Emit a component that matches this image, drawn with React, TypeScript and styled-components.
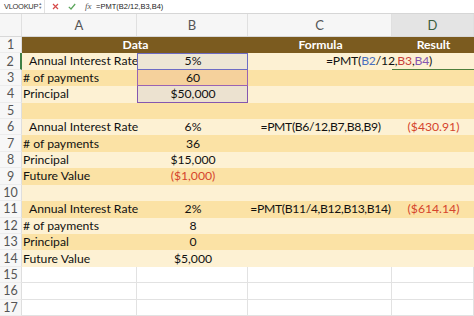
import React from "react";
import styled, { createGlobalStyle } from "styled-components";

const Global = createGlobalStyle`
  html, body { margin: 0; padding: 0; background: #ffffff; }
  body { width: 474px; height: 316px; overflow: hidden; font-family: Lato, "Open Sans", sans-serif; }
`;

const COLS = "22px 115px 111px 144px 82px";
const ROW_H = 16.45;
const FS = "12.2px";

const Page = styled.div`
  width: 474px;
  height: 316px;
  display: flex;
  flex-direction: column;
  overflow: hidden;
`;

const FormulaBar = styled.div`
  height: 13px;
  border-bottom: 1px solid #d6d6d6;
  display: flex;
  align-items: center;
  font-family: "Liberation Sans", Arial, sans-serif;
  font-size: 7.5px;
  color: #333;
  background: #fff;
`;

const NameBox = styled.div`
  width: 44px;
  display: flex;
  align-items: center;
  justify-content: space-between;
  padding: 0 4px 0 4px;
  box-sizing: border-box;
  letter-spacing: -0.3px;
`;

const Spinner = styled.span`
  display: flex;
  flex-direction: column;
  font-size: 4px;
  line-height: 4px;
  color: #777;
`;

const BarIcons = styled.div`
  display: flex;
  align-items: center;
  gap: 9px;
  padding-left: 7px;
  border-left: 1px solid #e2e2e2;
  height: 100%;
  width: 50px;
  box-sizing: border-box;
`;

const FxLabel = styled.span`
  font-family: "Liberation Serif", serif;
  font-style: italic;
  font-size: 9px;
  color: #555;
`;

const FormulaText = styled.span`
  padding-left: 2px;
  font-size: 7.5px;
  color: #222;
`;

const HeaderRow = styled.div`
  height: 23px;
  display: grid;
  grid-template-columns: ${COLS};
  background: #f6f6f6;
  border-bottom: 1px solid #d8d8d8;
  box-sizing: border-box;
`;

const ColHead = styled.div<{ $active?: boolean }>`
  display: flex;
  align-items: center;
  justify-content: center;
  font-size: 13px;
  color: ${(p) => (p.$active ? "#3b5f3e" : "#555")};
  background: ${(p) => (p.$active ? "#e4e4e4" : "transparent")};
  border-right: 1px solid #e0e0e0;
  padding-top: 1px;
  box-sizing: border-box;
`;

const Row = styled.div<{ $bg: string }>`
  height: ${ROW_H}px;
  display: grid;
  grid-template-columns: ${COLS};
  background: ${(p) => p.$bg};
  position: relative;
`;

const RowNum = styled.div<{ $active?: boolean }>`
  background: #f7f7f7;
  color: #555;
  font-size: 12.5px;
  display: flex;
  align-items: center;
  justify-content: center;
  border-right: ${(p) => (p.$active ? "2px solid #3f7f45" : "1px solid #dedede")};
  border-bottom: 1px solid #ececec;
  box-sizing: border-box;
`;

const Cell = styled.div<{
  $align?: "left" | "center" | "right";
  $color?: string;
  $bold?: boolean;
  $span?: number;
  $fill?: string;
  $grid?: boolean;
  $indent?: number;
  $tight?: boolean;
}>`
  grid-column: span ${(p) => p.$span || 1};
  display: flex;
  align-items: center;
  justify-content: ${(p) =>
    p.$align === "center" ? "center" : p.$align === "right" ? "flex-end" : "flex-start"};
  padding-left: ${(p) => (p.$indent != null ? p.$indent : 1)}px;
  font-size: ${FS};
  letter-spacing: ${(p) => (p.$tight ? "-0.35px" : "0")};
  font-weight: ${(p) => (p.$bold ? 700 : 400)};
  color: ${(p) => p.$color || "#111"};
  background: ${(p) => p.$fill || "transparent"};
  white-space: nowrap;
  overflow: visible;
  box-sizing: border-box;
  border-right: ${(p) => (p.$grid ? "1px solid #e2e2e2" : "none")};
  border-bottom: ${(p) => (p.$grid ? "1px solid #e2e2e2" : "none")};
  line-height: 1;
`;

const RefBox = styled.div<{ $color: string; $top?: boolean }>`
  position: absolute;
  inset: 0;
  border-left: 1px solid ${(p) => p.$color};
  border-right: 1px solid ${(p) => p.$color};
  border-bottom: 1px solid ${(p) => p.$color};
  border-top: ${(p) => (p.$top ? `1px solid ${p.$color}` : "none")};
  pointer-events: none;
`;

const RefCell = styled(Cell)`
  position: relative;
`;

const ActiveLine = styled.div`
  position: absolute;
  left: 0;
  right: 0;
  bottom: 0;
  height: 1px;
  background: #4f7f3c;
`;

const Ref = styled.span<{ $c: string }>`
  color: ${(p) => p.$c};
`;

const EditText = styled.span`
  position: absolute;
  left: 78px;
  top: 0;
  bottom: 0;
  display: flex;
  align-items: center;
  font-size: ${FS};
  letter-spacing: -0.2px;
  z-index: 2;
`;

const LIGHT = "#fdf1d3";
const DARK = "#fbe2a5";
const BROWN = "#7b5b1f";
const RED = "#d5452d";

type R = {
  n: number;
  a?: string;
  b?: string;
  bRed?: boolean;
  c?: string;
  d?: string;
  aIndent?: number;
};

const rows: R[] = [
  { n: 3, a: "# of payments", b: "60" },
  { n: 4, a: "Principal", b: "$50,000" },
  { n: 5 },
  { n: 6, a: "Annual Interest Rate", aIndent: 7, b: "6%", c: "=PMT(B6/12,B7,B8,B9)", d: "($430.91)" },
  { n: 7, a: "# of payments", b: "36" },
  { n: 8, a: "Principal", b: "$15,000" },
  { n: 9, a: "Future Value", b: "($1,000)", bRed: true },
  { n: 10 },
  { n: 11, a: "Annual Interest Rate", aIndent: 7, b: "2%", c: "=PMT(B11/4,B12,B13,B14)", d: "($614.14)" },
  { n: 12, a: "# of payments", b: "8" },
  { n: 13, a: "Principal", b: "0" },
  { n: 14, a: "Future Value", b: "$5,000" },
];

export default function App() {
  return (
    <Page>
      <Global />
      <FormulaBar>
        <NameBox>
          <span>VLOOKUP</span>
          <Spinner>
            <span>▲</span>
            <span>▼</span>
          </Spinner>
        </NameBox>
        <BarIcons>
          <svg width="7" height="7" viewBox="0 0 7 7">
            <path d="M1 1L6 6M6 1L1 6" stroke="#d64a4a" strokeWidth="1.2" />
          </svg>
          <svg width="8" height="7" viewBox="0 0 8 7">
            <path d="M0.8 3.8L3 6L7.2 1" stroke="#5aa55a" strokeWidth="1.2" fill="none" />
          </svg>
          <FxLabel>fx</FxLabel>
        </BarIcons>
        <FormulaText>=PMT(B2/12,B3,B4)</FormulaText>
      </FormulaBar>
      <HeaderRow>
        <ColHead />
        <ColHead>A</ColHead>
        <ColHead>B</ColHead>
        <ColHead>C</ColHead>
        <ColHead $active>D</ColHead>
      </HeaderRow>

      <Row $bg={BROWN}>
        <RowNum>1</RowNum>
        <Cell $span={2} $align="center" $bold $color="#fff">Data</Cell>
        <Cell $align="center" $bold $color="#fff">Formula</Cell>
        <Cell $align="center" $bold $color="#fff">Result</Cell>
      </Row>

      <Row $bg={LIGHT}>
        <RowNum $active>2</RowNum>
        <Cell $indent={7}>Annual Interest Rate</Cell>
        <RefCell $align="center" $fill="#ede6d5">
          5%
          <RefBox $color="#6d6cc4" $top />
        </RefCell>
        <RefCell>
          <EditText>
            =PMT(<Ref $c="#4a70bf">B2</Ref>/12,<Ref $c="#c8413a">B3</Ref>,<Ref $c="#8457b0">B4</Ref>)
          </EditText>
        </RefCell>
        <RefCell>
          <ActiveLine />
        </RefCell>
      </Row>

      {rows.map((r) => {
        const bg = r.n % 2 === 0 ? LIGHT : DARK;
        const isRef = r.n === 3 || r.n === 4;
        return (
          <Row key={r.n} $bg={bg}>
            <RowNum>{r.n}</RowNum>
            <Cell $indent={r.aIndent}>{r.a}</Cell>
            {isRef ? (
              <RefCell $align="center" $fill={r.n === 3 ? "#f5d19c" : "#ece2d0"}>
                {r.b}
                <RefBox $color={r.n === 3 ? "#9a63b3" : "#8457b0"} />
              </RefCell>
            ) : (
              <Cell $align="center" $color={r.bRed ? RED : undefined}>{r.b}</Cell>
            )}
            <Cell $align="center" $tight>{r.c}</Cell>
            <Cell $align="center" $color={RED}>{r.d}</Cell>
          </Row>
        );
      })}

      {[15, 16, 17].map((n) => (
        <Row key={n} $bg="#ffffff">
          <RowNum>{n}</RowNum>
          <Cell $grid />
          <Cell $grid />
          <Cell $grid />
          <Cell $grid />
        </Row>
      ))}
    </Page>
  );
}
